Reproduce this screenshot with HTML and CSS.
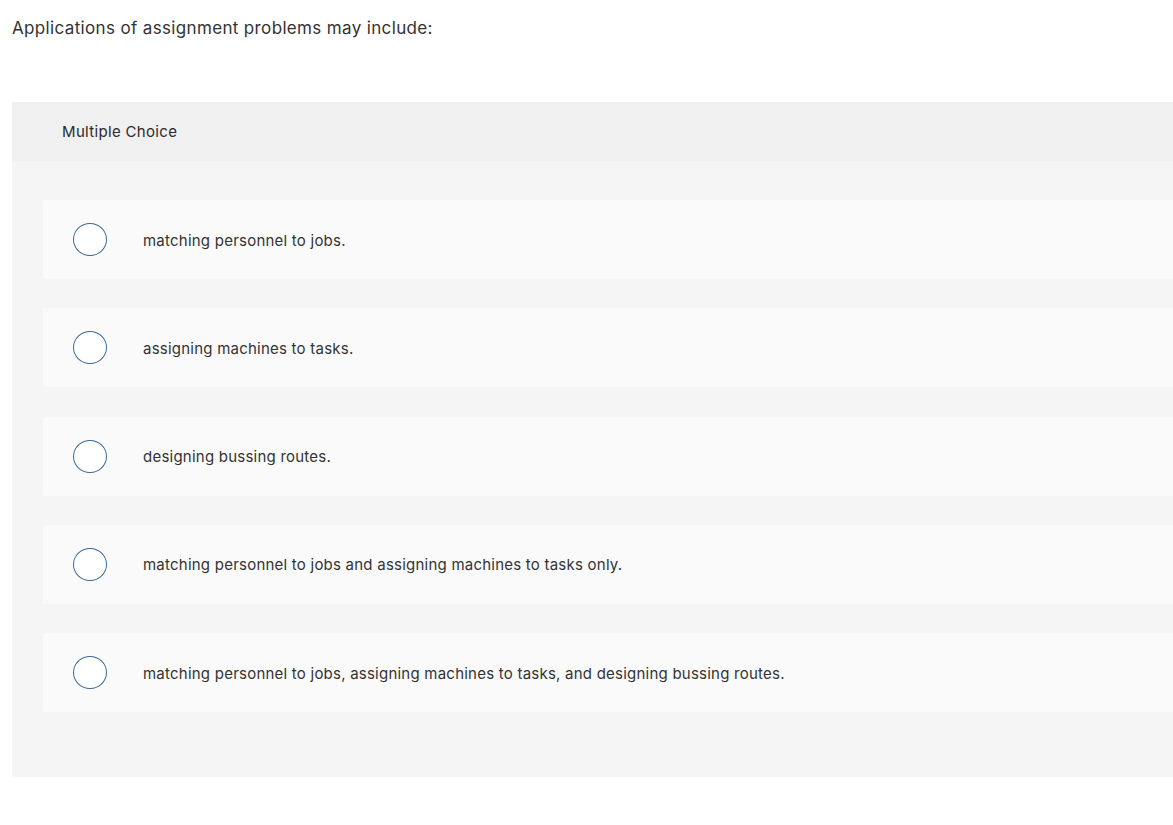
FILE: index.html
```html
<!DOCTYPE html>
<html>
<head>
<meta charset="utf-8">
<link rel="stylesheet" href="styles.css">
</head>
<body>
<div class="page">
  <p class="question">Applications of assignment problems may include:</p>
  <div class="mc">
    <div class="mc-header">Multiple Choice</div>
    <div class="mc-body">
      <div class="option"><span class="radio"></span><span class="label">matching personnel to jobs.</span></div>
      <div class="option"><span class="radio"></span><span class="label">assigning machines to tasks.</span></div>
      <div class="option"><span class="radio"></span><span class="label">designing bussing routes.</span></div>
      <div class="option"><span class="radio"></span><span class="label">matching personnel to jobs and assigning machines to tasks only.</span></div>
      <div class="option"><span class="radio"></span><span class="label">matching personnel to jobs, assigning machines to tasks, and designing bussing routes.</span></div>
    </div>
  </div>
</div>
</body>
</html>
```

FILE: styles.css
```css
html, body {
  margin: 0;
  padding: 0;
  background: #fff;
  overflow-x: hidden;
}
body {
  font-family: "Inter", "Open Sans", sans-serif;
  color: #333;
}
.page {
  padding: 17px 0 0 12px;
}
.question {
  margin: 0;
  font-size: 17px;
  line-height: 22px;
  letter-spacing: 0.35px;
  color: #333;
}
.mc {
  margin-top: 63px;
  margin-right: -40px;
  background: #f5f5f5;
}
.mc-header {
  height: 59px;
  background: #f0f0f0;
  padding-left: 50px;
  display: flex;
  align-items: center;
  font-size: 15px;
  letter-spacing: 0.33px;
  color: #2b2b2b;
}
.mc-body {
  padding: 39px 0 65px 31px;
  display: flex;
  flex-direction: column;
  gap: 29.25px;
}
.option {
  height: 79px;
  background: #fafafa;
  border-radius: 3px 0 0 3px;
  display: flex;
  align-items: center;
  padding-left: 30px;
}
.radio {
  width: 32px;
  height: 31px;
  border: 1.3px solid #3a6794;
  border-radius: 50%;
  background: #fff;
  flex: none;
}
.label {
  margin-left: 36px;
  padding-top: 2px;
  font-size: 15px;
  line-height: 20px;
  letter-spacing: 0.23px;
  color: #333;
}
```
